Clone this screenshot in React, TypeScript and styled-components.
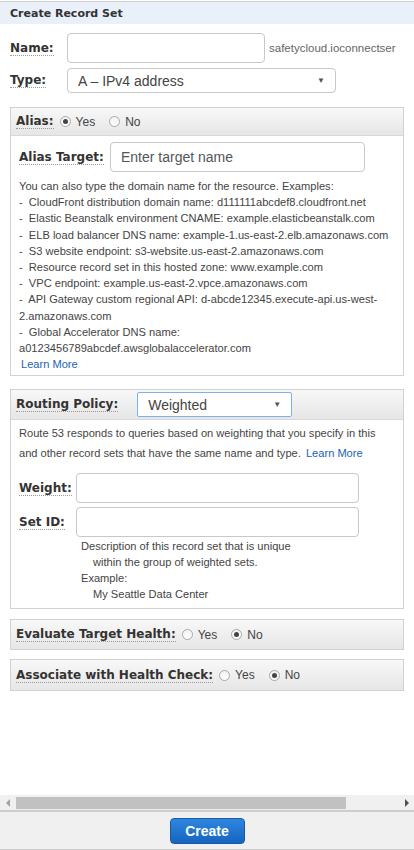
import React from 'react';
import styled, { createGlobalStyle, css } from 'styled-components';

const GlobalStyle = createGlobalStyle`
  html, body {
    margin: 0;
    padding: 0;
    background: #fff;
  }
  body {
    font-family: "Liberation Sans", Arial, sans-serif;
    font-size: 12px;
    color: #444;
  }
`;

const Page = styled.div`
  width: 414px;
  height: 850px;
  display: flex;
  flex-direction: column;
  overflow: hidden;
  box-sizing: border-box;
`;

const Main = styled.div`
  flex: 1;
  display: flex;
  flex-direction: column;
`;

const Header = styled.div`
  height: 22px;
  margin-top: 1px;
  border-top: 1px solid #d0d0d0;
  background: #e9f0fa;
  display: flex;
  align-items: center;
  padding-left: 10px;
  font-family: "DejaVu Sans", Verdana, sans-serif;
  font-weight: bold;
  font-size: 11px;
  color: #333;
`;

const Form = styled.div`
  padding: 0 10px;
  display: flex;
  flex-direction: column;
`;

const Row = styled.div<{ $label: number; $top: number }>`
  display: grid;
  grid-template-columns: ${({ $label }) => $label}px auto 1fr;
  align-items: center;
  margin-top: ${({ $top }) => $top}px;
`;

const Label = styled.span`
  font-family: "DejaVu Sans", Verdana, sans-serif;
  font-weight: bold;
  font-size: 12px;
  color: #333;
  justify-self: start;
  border-bottom: 1px dotted #999;
  line-height: 14px;
  white-space: nowrap;
`;

const TextInput = styled.div<{ $width: number; $height?: number }>`
  width: ${({ $width }) => $width}px;
  height: ${({ $height }) => $height ?? 30}px;
  box-sizing: border-box;
  border: 1px solid #c8c8c8;
  border-radius: 4px;
  background: #fff;
  display: flex;
  align-items: center;
  padding-left: 10px;
  font-size: 14px;
  color: #555;
`;

const Select = styled.div<{ $width: number; $focus?: boolean }>`
  width: ${({ $width }) => $width}px;
  height: 25px;
  box-sizing: border-box;
  border: 1px solid ${({ $focus }) => ($focus ? '#7fb0e8' : '#c8c8c8')};
  border-radius: ${({ $focus }) => ($focus ? '2px' : '4px')};
  background: #fff;
  display: flex;
  align-items: center;
  justify-content: space-between;
  padding: 0 10px;
  font-size: 14px;
  color: #444;
`;

const Caret = styled.span`
  font-size: 8px;
  color: #555;
`;

const Suffix = styled.span`
  padding-left: 4px;
  font-size: 11.5px;
  color: #666;
  white-space: nowrap;
`;

const Panel = styled.div<{ $top: number }>`
  margin-top: ${({ $top }) => $top}px;
  border: 1px solid #d2d2d2;
  display: flex;
  flex-direction: column;
`;

const PanelHeader = styled.div<{ $height: number; $last?: boolean }>`
  height: ${({ $height }) => $height}px;
  box-sizing: border-box;
  display: flex;
  align-items: center;
  gap: 6px;
  padding-left: 5px;
  background: linear-gradient(#f8f8f8, #e6e6e6);
  ${({ $last }) =>
    !$last &&
    css`
      border-bottom: 1px solid #d8d8d8;
    `}
`;

const PanelBody = styled.div<{ $pad: string }>`
  padding: ${({ $pad }) => $pad};
  display: flex;
  flex-direction: column;
`;

const RadioGroup = styled.label`
  display: flex;
  align-items: center;
  gap: 5px;
  margin-right: 8px;
  font-size: 12px;
  color: #444;
`;

const RadioDot = styled.span<{ $checked?: boolean }>`
  width: 11px;
  height: 11px;
  box-sizing: border-box;
  border-radius: 50%;
  border: 1px solid #a8a8a8;
  background: linear-gradient(#f2f2f2, #fff);
  display: flex;
  align-items: center;
  justify-content: center;
  &::after {
    content: '';
    width: 5px;
    height: 5px;
    border-radius: 50%;
    background: ${({ $checked }) => ($checked ? '#444' : 'transparent')};
  }
`;

const Help = styled.div<{ $lh: number; $top: number }>`
  margin-top: ${({ $top }) => $top}px;
  font-size: 11.1px;
  line-height: ${({ $lh }) => $lh}px;
  color: #444;
`;

const Line = styled.div<{ $indent?: number }>`
  padding-left: ${({ $indent }) => $indent ?? 0}px;
  white-space: pre;
`;

const Link = styled.a`
  color: #1a62b8;
  text-decoration: none;
  padding-left: 2px;
`;

const Note = styled.div`
  margin: 1px 0 0 62px;
  font-size: 11.1px;
  line-height: 16px;
  color: #444;
`;

const ScrollBar = styled.div`
  height: 15px;
  background: #f0f0f0;
  display: flex;
  align-items: center;
  padding: 0 4px 0 5px;
  gap: 5px;
`;

const Thumb = styled.div`
  width: 330px;
  height: 12px;
  background: #c1c1c1;
`;

const Arrow = styled.svg`
  width: 6px;
  height: 8px;
  flex: none;
`;

const Spacer = styled.div<{ $width?: number }>`
  flex: ${({ $width }) => ($width ? 'none' : '1')};
  width: ${({ $width }) => $width ?? 0}px;
`;

const Footer = styled.div`
  height: 40px;
  box-sizing: border-box;
  background: #f0f0f0;
  border-top: 2px solid #cdcdcd;
  border-bottom: 1px solid #cdcdcd;
  display: flex;
  justify-content: center;
  padding-top: 6px;
`;

const CreateButton = styled.button`
  width: 75px;
  height: 26px;
  border-radius: 4px;
  border: 1px solid #1a5aa5;
  background: linear-gradient(#2f86de, #1565c0);
  color: #fff;
  font-family: "Liberation Sans", Arial, sans-serif;
  font-weight: bold;
  font-size: 14px;
  padding: 0;
`;

function Radio({ label, checked }: { label: string; checked?: boolean }) {
  return (
    <RadioGroup>
      <RadioDot $checked={checked} />
      {label}
    </RadioGroup>
  );
}

const aliasExamples = [
  '-  CloudFront distribution domain name: d111111abcdef8.cloudfront.net',
  '-  Elastic Beanstalk environment CNAME: example.elasticbeanstalk.com',
  '-  ELB load balancer DNS name: example-1.us-east-2.elb.amazonaws.com',
  '-  S3 website endpoint: s3-website.us-east-2.amazonaws.com',
  '-  Resource record set in this hosted zone: www.example.com',
  '-  VPC endpoint: example.us-east-2.vpce.amazonaws.com',
  '-  API Gateway custom regional API: d-abcde12345.execute-api.us-west-',
  '2.amazonaws.com',
  '-  Global Accelerator DNS name:',
  'a0123456789abcdef.awsglobalaccelerator.com',
];

export default function App() {
  return (
    <Page>
      <GlobalStyle />
      <Main>
        <Header>Create Record Set</Header>
        <Form>
          <Row $label={57} $top={9}>
            <Label>Name:</Label>
            <TextInput $width={198} />
            <Suffix>safetycloud.ioconnectser</Suffix>
          </Row>
          <Row $label={57} $top={5}>
            <Label>Type:</Label>
            <Select $width={269}>
              A – IPv4 address
              <Caret>▼</Caret>
            </Select>
          </Row>

          <Panel $top={14}>
            <PanelHeader $height={28}>
              <Label>Alias:</Label>
              <Radio label="Yes" checked />
              <Radio label="No" />
            </PanelHeader>
            <PanelBody $pad="6px 8px 3px 8px">
              <Row $label={91} $top={0}>
                <Label>Alias Target:</Label>
                <TextInput $width={255}>Enter target name</TextInput>
              </Row>
              <Help $lh={16.2} $top={6}>
                <Line>You can also type the domain name for the resource. Examples:</Line>
                {aliasExamples.map((t) => (
                  <Line key={t}>{t}</Line>
                ))}
                <Line>
                  <Link>Learn More</Link>
                </Line>
              </Help>
            </PanelBody>
          </Panel>

          <Panel $top={13}>
            <PanelHeader $height={30}>
              <Label>Routing Policy:</Label>
              <Spacer $width={7} />
              <Select $width={155} $focus>
                Weighted
                <Caret>▼</Caret>
              </Select>
            </PanelHeader>
            <PanelBody $pad="3px 8px 6px 8px">
              <Help $lh={20} $top={0}>
                <Line>Route 53 responds to queries based on weighting that you specify in this</Line>
                <Line>
                  and other record sets that have the same name and type. <Link>Learn More</Link>
                </Line>
              </Help>
              <Row $label={57} $top={10}>
                <Label>Weight:</Label>
                <TextInput $width={283} />
              </Row>
              <Row $label={57} $top={4}>
                <Label>Set ID:</Label>
                <TextInput $width={283} />
              </Row>
              <Note>
                <Line>Description of this record set that is unique</Line>
                <Line $indent={12}>within the group of weighted sets.</Line>
                <Line>Example:</Line>
                <Line $indent={12}>My Seattle Data Center</Line>
              </Note>
            </PanelBody>
          </Panel>

          <Panel $top={10}>
            <PanelHeader $height={29} $last>
              <Label>Evaluate Target Health:</Label>
              <Radio label="Yes" />
              <Radio label="No" checked />
            </PanelHeader>
          </Panel>

          <Panel $top={9}>
            <PanelHeader $height={30} $last>
              <Label>Associate with Health Check:</Label>
              <Radio label="Yes" />
              <Radio label="No" checked />
            </PanelHeader>
          </Panel>
        </Form>
      </Main>
      <ScrollBar>
        <Arrow viewBox="0 0 6 8">
          <path d="M5 0 L1 4 L5 8 Z" fill="#a3a3a3" />
        </Arrow>
        <Thumb />
        <Spacer />
        <Arrow viewBox="0 0 6 8">
          <path d="M1 0 L5 4 L1 8 Z" fill="#505050" />
        </Arrow>
      </ScrollBar>
      <Footer>
        <CreateButton>Create</CreateButton>
      </Footer>
    </Page>
  );
}
